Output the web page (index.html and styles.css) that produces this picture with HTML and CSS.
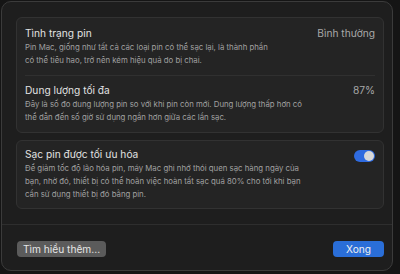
FILE: index.html
```html
<!DOCTYPE html>
<html lang="vi">
<head>
<meta charset="utf-8">
<link rel="stylesheet" href="styles.css">
</head>
<body>
<div class="window">
  <div class="content">
    <div class="card">
      <div class="section first">
        <div class="row">
          <span class="title">Tình trạng pin</span>
          <span class="value">Bình thường</span>
        </div>
        <p class="desc">Pin Mac, giống như tất cả các loại pin có thể sạc lại, là thành phần<br>có thể tiêu hao, trở nên kém hiệu quả do bị chai.</p>
      </div>
      <div class="divider"></div>
      <div class="section second">
        <div class="row">
          <span class="title">Dung lượng tối đa</span>
          <span class="value">87%</span>
        </div>
        <p class="desc">Đây là số đo dung lượng pin so với khi pin còn mới. Dung lượng thấp hơn có<br>thể dẫn đến số giờ sử dụng ngắn hơn giữa các lần sạc.</p>
      </div>
    </div>
    <div class="card">
      <div class="section single">
        <div class="row">
          <span class="title">Sạc pin được tối ưu hóa</span>
          <span class="toggle"><span class="knob"></span></span>
        </div>
        <p class="desc">Để giảm tốc độ lão hóa pin, máy Mac ghi nhớ thói quen sạc hàng ngày của<br>bạn, nhờ đó, thiết bị có thể hoãn việc hoàn tất sạc quá 80% cho tới khi bạn<br>cần sử dụng thiết bị đó bằng pin.</p>
      </div>
    </div>
  </div>
  <div class="footer">
    <button class="btn">Tìm hiểu thêm...</button>
    <button class="btn primary">Xong</button>
  </div>
</div>
</body>
</html>
```

FILE: styles.css
```css
html, body {
  margin: 0;
  padding: 0;
  background: #151515;
}
body {
  width: 400px;
  height: 274px;
  overflow: hidden;
  font-family: Inter, "Noto Sans", sans-serif;
  -webkit-font-smoothing: antialiased;
}
.window {
  margin: 1px;
  width: 390px;
  height: 268px;
  border: 1px solid #3b3b3b;
  border-radius: 10px;
  background: #1e1e1e;
  display: flex;
  flex-direction: column;
}
.content {
  padding: 15px 8px 0 14px;
  display: flex;
  flex-direction: column;
  gap: 7px;
}
.card {
  background: #242424;
  border: 1px solid #323232;
  border-radius: 6px;
  display: flex;
  flex-direction: column;
}
.section {
  padding: 7px 8px 8px 8px;
}
.section.second {
  padding-top: 6px;
}
.section.single {
  padding-top: 5px;
  padding-bottom: 7px;
}
.divider {
  height: 1px;
  background: #303030;
  margin: 0 8px;
}
.row {
  display: flex;
  justify-content: space-between;
  align-items: center;
  height: 16px;
}
.title {
  font-size: 10.2px;
  color: #e2e2e2;
}
.value {
  font-size: 10.2px;
  color: #a8a8a8;
}
.desc {
  margin: 0;
  font-size: 7.8px;
  line-height: 13px;
  color: #a0a0a0;
  white-space: nowrap;
}
.toggle {
  width: 21px;
  height: 12px;
  border-radius: 6px;
  background: #2f6be0;
  position: relative;
  margin-top: 3px;
}
.knob {
  position: absolute;
  right: 1px;
  top: 1px;
  width: 10px;
  height: 10px;
  border-radius: 50%;
  background: #d8d8d8;
}
.footer {
  margin-top: auto;
  border-top: 1px solid #2e2e2e;
  height: 46px;
  display: flex;
  justify-content: space-between;
  align-items: flex-start;
  padding: 16px 8px 0 15px;
  box-sizing: border-box;
}
.btn {
  font-family: Inter, "Noto Sans", sans-serif;
  font-size: 10.2px;
  color: #e6e6e6;
  background: #5b5b5b;
  border: none;
  border-radius: 4px;
  height: 16px;
  padding: 0;
  line-height: 16px;
  width: 89px;
  white-space: nowrap;
  text-align: center;
}
.btn.primary {
  background: #2a6ed8;
  width: 51px;
  color: #f0f0f0;
}
```
